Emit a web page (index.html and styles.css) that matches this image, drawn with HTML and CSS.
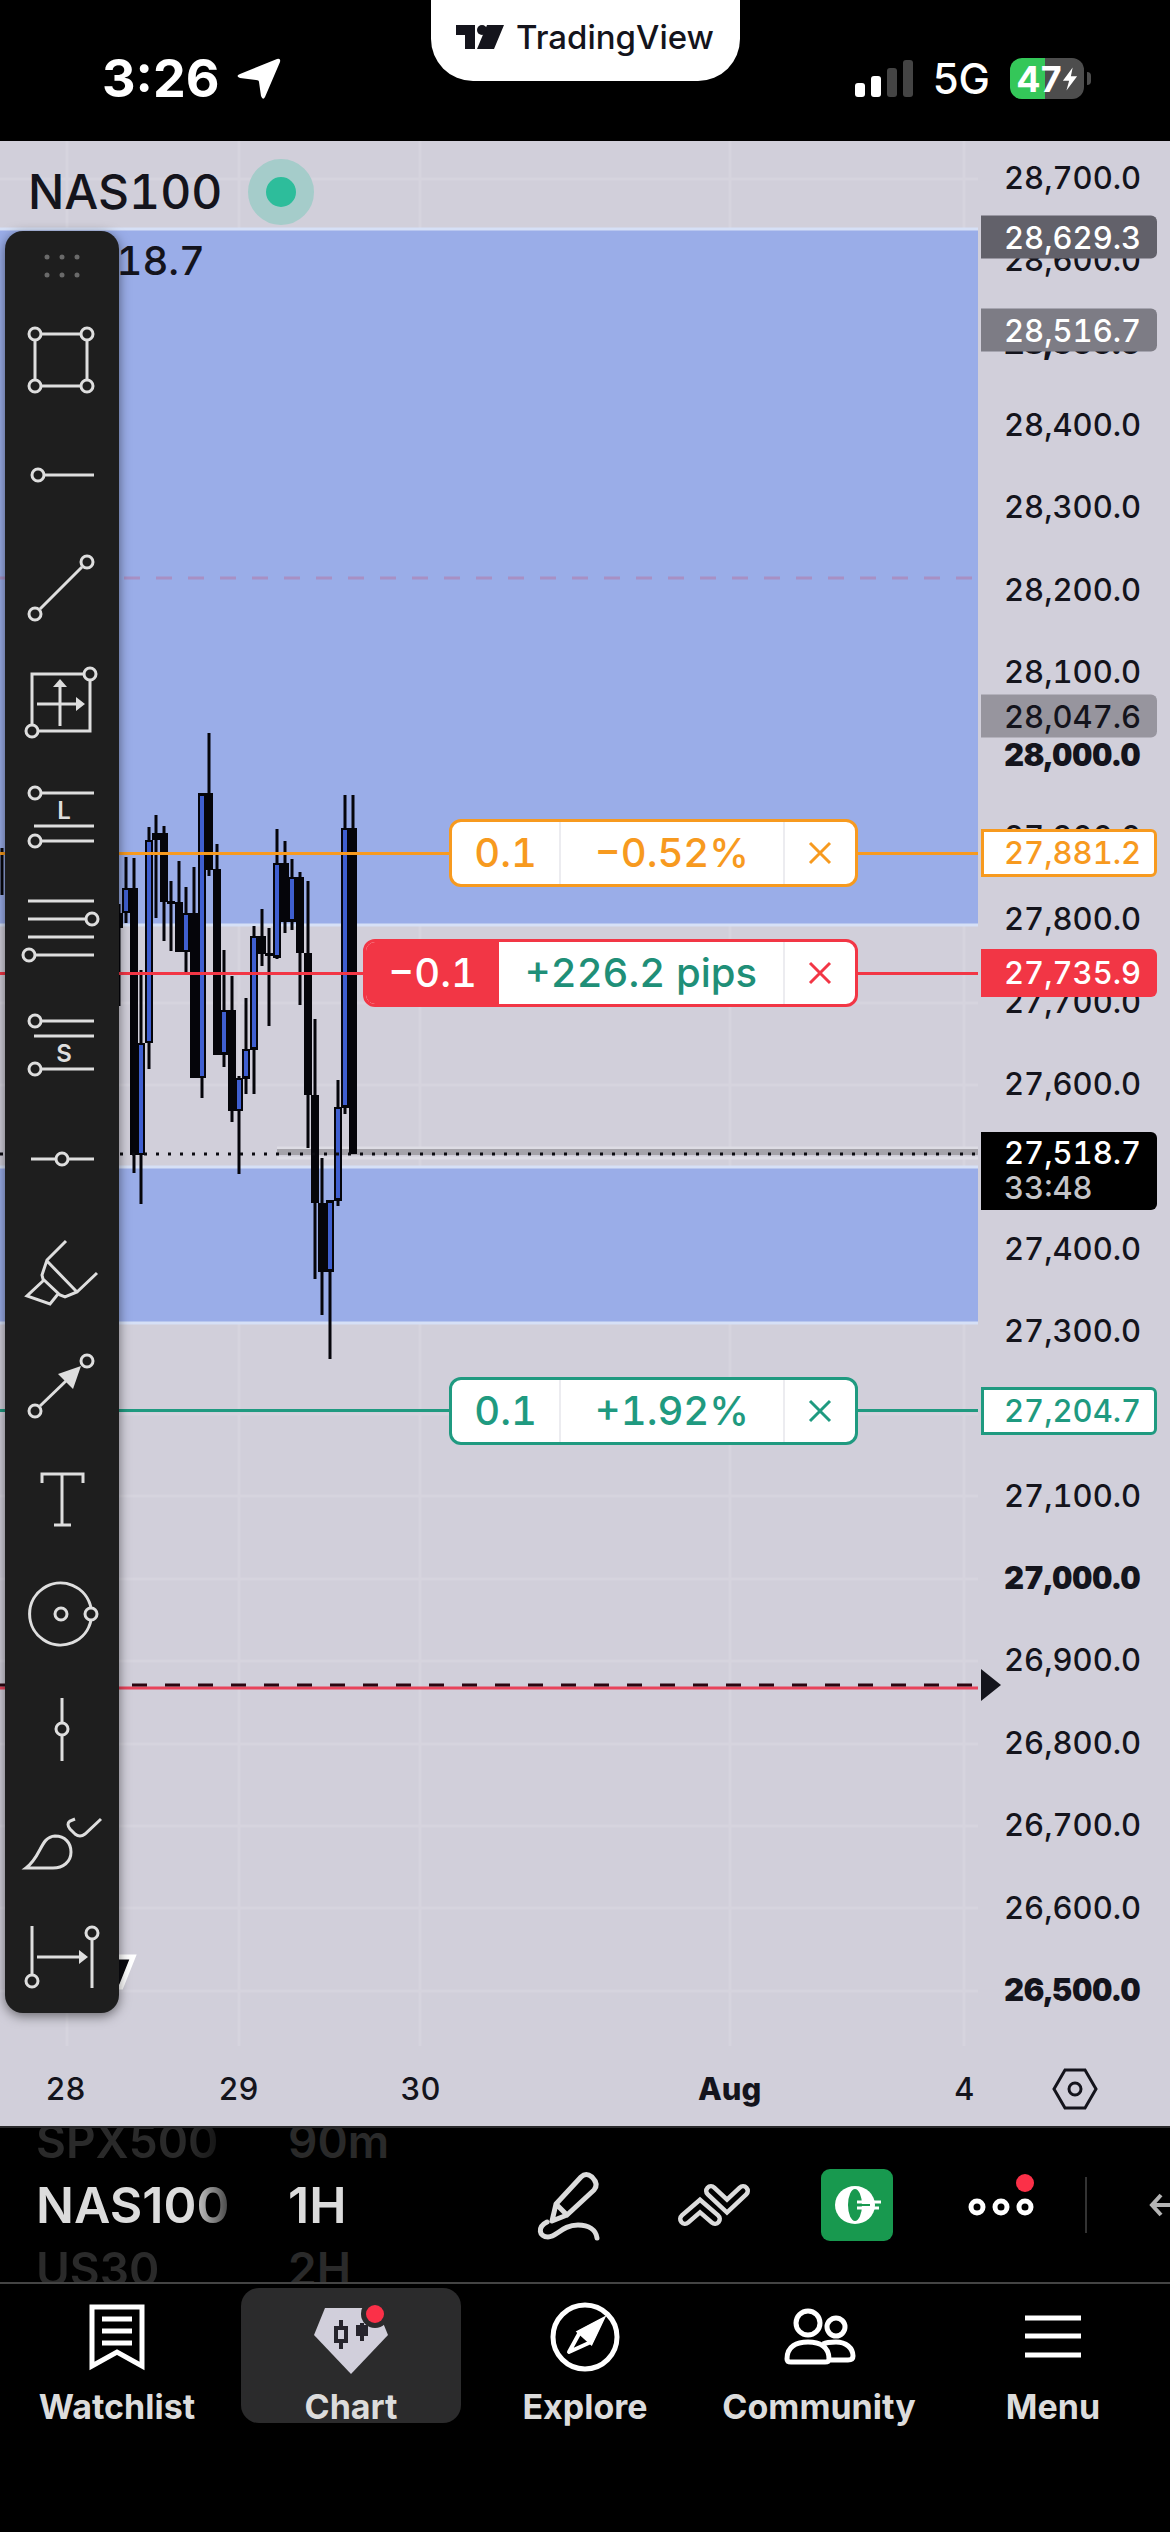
FILE: index.html
```html
<!DOCTYPE html>
<html lang="en">
<head>
  <meta charset="UTF-8">
  <meta name="viewport" content="width=device-width, initial-scale=1.0">
  <title>NAS100 Chart</title>
  <link rel="stylesheet" href="styles.css">
</head>
<body>
  <div class="app">

    <!-- Status bar -->
    <header class="status">
      <div class="status-left">
        <span class="time">3:26</span>
        <svg width="46" height="42" viewBox="0 0 46 42"><path d="M42 1Q46 0 45 4L30 39Q28 43 26 38L24 24Q24 22 21 22L5 20Q0 18 5 16Z" fill="#fff"/></svg>
      </div>
      <div class="brand">
        <svg width="48" height="26" viewBox="0 0 48 26"><path fill="#14141c" d="M0 1H19V25H9V11H0ZM32 25H21L31 1H48L38 25Z"/><circle cx="26" cy="6" r="5" fill="#14141c"/></svg>
        <span>TradingView</span>
      </div>
      <div class="status-right">
        <svg width="58" height="38" viewBox="0 0 58 38">
          <rect x="0" y="23" width="10" height="14" rx="3" fill="#fff"/>
          <rect x="16" y="16" width="10" height="21" rx="3" fill="#fff"/>
          <rect x="32" y="8" width="10" height="29" rx="3" fill="#444"/>
          <rect x="48" y="0" width="10" height="37" rx="3" fill="#444"/>
        </svg>
        <span class="network">5G</span>
        <div class="battery">
          <span>47</span>
          <svg width="16" height="28" viewBox="0 0 18 28"><path d="M12 1L1 16H8L5 27L17 11H10Z" fill="#fff"/></svg>
        </div>
      </div>
    </header>

    <!-- Chart -->
    <main class="chart">
      <div class="pane">
        <svg class="plot" width="100%" height="100%">
          <!-- grid -->
          <path stroke="#d6d4de" stroke-width="3" fill="none" d="M67 0V1905M239 0V1905M420 0V1905M730 0V1905M964 0V1905M0 38H978M0 1273H978M0 1355H978M0 1438H978M0 1520H978M0 1603H978M0 1685H978M0 1767H978M0 1850H978M0 697H978M0 615H978M0 532H978M0 862H978M0 944H978"/>
          <!-- zones -->
          <rect x="-4" y="88" width="990" height="696" fill="#9aade8" stroke="#d6e0f6" stroke-width="3"/>
          <rect x="-4" y="1026" width="990" height="156" fill="#9aade8" stroke="#d6e0f6" stroke-width="3"/>
          <path d="M0 437H978" stroke="#a890c4" stroke-width="3" stroke-dasharray="16 16" stroke-dashoffset="4"/>
          <path d="M277 1007H978M277 1017H978" stroke="#dddce4" stroke-width="3"/>
          <path d="M277 1011H978" stroke="#a5a3aa" stroke-width="6"/>
          <!-- candles: wicks, bodies, up fills -->
          <g transform="translate(0 579)" fill="none">
            <path stroke="#05050a" stroke-width="3" d="M2 128V175M119 184V286M126 137V203M134 138V453M141 250V484M149 107V349M156 95V198M164 106V221M171 161V231M179 141V232M186 167V253M194 147V358M202 73V378M209 13V156M217 124V335M224 230V347M232 256V402M239 356V454M246 278V374M254 206V374M262 189V246M269 208V306M277 109V239M285 121V213M292 139V210M300 152V285M308 161V428M315 299V559M322 438V595M330 480V639M338 360V486M345 75V394M353 75V434"/>
            <path stroke="#05050a" stroke-width="8" d="M119 193V208M126 168V193M134 168V435M141 323V435M149 120V323M156 113V120M164 113V182M171 181V184M179 182V232M186 193V232M194 193V358M202 73V358M209 73V150M217 149V335M224 290V335M232 290V391M239 358V391M246 329V359M254 216V330M262 216V234M269 233V236M277 143V238M285 143V202M292 157V202M300 157V233M308 233V375M315 375V483M322 483V552M330 480V552M338 387V481M345 108V388M353 108V434"/>
            <path stroke="#3f5fd0" stroke-width="4" d="M126 170V191M141 325V433M149 122V321M186 195V230M202 76V356M224 292V332M239 360V389M246 331V356M254 218V327M277 145V235M292 159V199M330 483V549M338 389V478M345 110V385"/>
          </g>
          <!-- price and order lines -->
          <path d="M0 1013H978" stroke="#0b0b10" stroke-width="3" stroke-dasharray="3 9"/>
          <path d="M0 1547H978" stroke="#e8435a" stroke-width="3"/>
          <path d="M0 1544H978" stroke="#2a0610" stroke-width="3" stroke-dasharray="15 18"/>
          <!-- watermark behind the toolbar -->
          <path d="M90 1816H133L121 1846H104Z" fill="#0b0b10" stroke="#fff" stroke-width="5"/>
        </svg>

        <div class="legend">
          <div class="symbol">
            <span>NAS100</span>
            <i class="market-open"></i>
          </div>
          <div class="last">27,518.7</div>
        </div>

        <div class="track">
          <div class="order orange" style="--price: 27881.2">
            <div class="order-box"><span class="qty">0.1</span><span class="pnl">−0.52%</span><button aria-label="Close order"><svg width="24" height="24" viewBox="0 0 24 24"><path d="M2 2L22 22M22 2L2 22"/></svg></button></div>
          </div>
          <div class="order red" style="--price: 27735.9">
            <div class="order-box"><span class="qty">−0.1</span><span class="pnl">+226.2 pips</span><button aria-label="Close position"><svg width="24" height="24" viewBox="0 0 24 24"><path d="M2 2L22 22M22 2L2 22"/></svg></button></div>
          </div>
          <div class="order green" style="--price: 27204.7">
            <div class="order-box"><span class="qty">0.1</span><span class="pnl">+1.92%</span><button aria-label="Close order"><svg width="24" height="24" viewBox="0 0 24 24"><path d="M2 2L22 22M22 2L2 22"/></svg></button></div>
          </div>
        </div>

        <!-- Drawing toolbar -->
        <div class="tools">
          <svg class="grip" viewBox="0 0 114 72"><g fill="#6a6a6a"><circle cx="42" cy="26" r="2.5"/><circle cx="57" cy="26" r="2.5"/><circle cx="72" cy="26" r="2.5"/><circle cx="42" cy="44" r="2.5"/><circle cx="57" cy="44" r="2.5"/><circle cx="72" cy="44" r="2.5"/></g></svg>
          <button aria-label="Rectangle"><svg viewBox="0 0 114 114"><path d="M37 31H75M37 83H75M30 38V76M82 38V76"/><circle cx="30" cy="31" r="6"/><circle cx="82" cy="31" r="6"/><circle cx="30" cy="83" r="6"/><circle cx="82" cy="83" r="6"/></svg></button>
          <button aria-label="Horizontal ray"><svg viewBox="0 0 114 114"><circle cx="33" cy="58" r="6"/><path d="M39 58H89"/></svg></button>
          <button aria-label="Trend line"><svg viewBox="0 0 114 114"><circle cx="82" cy="31" r="6"/><circle cx="30" cy="83" r="6"/><path d="M35 78L77 36"/></svg></button>
          <button aria-label="Date and price range"><svg viewBox="0 0 114 114"><path d="M79 29H27V79M34 86H85V36M55 81V38M32 59H76"/><circle cx="85" cy="29" r="6"/><circle cx="27" cy="86" r="6"/><path class="solid" d="M55 34L62 42H48ZM80 59L71 52V66Z"/></svg></button>
          <button aria-label="Long position"><svg viewBox="0 0 114 114"><path d="M37 34H89M29 67H89M37 82H89"/><circle cx="30" cy="34" r="6"/><circle cx="30" cy="82" r="6"/><text x="59" y="60">L</text></svg></button>
          <button aria-label="Fib retracement"><svg viewBox="0 0 114 114"><path d="M23 28H89M23 46H80M23 64H89M31 82H89"/><circle cx="87" cy="46" r="6"/><circle cx="24" cy="82" r="6"/></svg></button>
          <button aria-label="Short position"><svg viewBox="0 0 114 114"><path d="M37 34H89M29 49H89M37 82H89"/><circle cx="30" cy="34" r="6"/><circle cx="30" cy="82" r="6"/><text x="59" y="75">S</text></svg></button>
          <button aria-label="Horizontal line"><svg viewBox="0 0 114 114"><path d="M26 58H51M63 58H89"/><circle cx="57" cy="58" r="6"/></svg></button>
          <button aria-label="Highlighter"><svg viewBox="0 0 114 114"><path d="M61 26L42 45L37 60L38 64L55 80L60 82L72 77L92 58M42 46L72 77M39 65L22 81L45 89L53 79"/></svg></button>
          <button aria-label="Arrow"><svg viewBox="0 0 114 114"><circle cx="82" cy="32" r="6"/><circle cx="30" cy="82" r="6"/><path d="M35 77L62 51"/><path class="solid" d="M76 37L53 45L68 60Z"/></svg></button>
          <button aria-label="Text"><svg viewBox="0 0 114 114"><path d="M37 40V31H78V40M57 31V82M49 82H66"/></svg></button>
          <button aria-label="Circle"><svg viewBox="0 0 114 114"><path d="M86 51A31 31 0 1 0 86 63"/><circle cx="56" cy="57" r="6"/><circle cx="86" cy="57" r="6"/></svg></button>
          <button aria-label="Vertical line"><svg viewBox="0 0 114 114"><path d="M57 27V52M57 64V90"/><circle cx="57" cy="58" r="6"/></svg></button>
          <button aria-label="Brush"><svg viewBox="0 0 114 114"><path d="M21 83C37 71 35 52 50 51C60 51 66 58 66 67C66 77 58 83 48 83ZM70 34L65 36Q61 39 65 44L70 49Q75 53 80 49L96 34"/></svg></button>
          <button aria-label="Date range"><svg viewBox="0 0 114 114"><path d="M27 27V76M87 41V89M32 58H76"/><circle cx="27" cy="82" r="6"/><circle cx="87" cy="34" r="6"/><path class="solid" d="M83 58L74 51V65Z"/></svg></button>
        </div>
      </div>

      <!-- Price scale -->
      <div class="scale">
        <ol class="ticks">
          <li>28,700.0</li><li>28,600.0</li><li class="major">28,500.0</li><li>28,400.0</li><li>28,300.0</li><li>28,200.0</li><li>28,100.0</li><li class="major">28,000.0</li><li>27,900.0</li><li>27,800.0</li><li>27,700.0</li><li>27,600.0</li><li class="blank">27,500.0</li><li>27,400.0</li><li>27,300.0</li><li class="blank">27,200.0</li><li>27,100.0</li><li class="major">27,000.0</li><li>26,900.0</li><li>26,800.0</li><li>26,700.0</li><li>26,600.0</li><li class="major">26,500.0</li>
        </ol>
        <div class="track">
          <div class="tag dark" style="--price: 28629.3">28,629.3</div>
          <div class="tag mid" style="--price: 28516.7">28,516.7</div>
          <div class="tag light" style="--price: 28047.6">28,047.6</div>
          <div class="tag outline orange" style="--price: 27881.2">27,881.2</div>
          <div class="tag red" style="--price: 27735.9">27,735.9</div>
          <div class="tag current" style="--price: 27495">27,518.7<small>33:48</small></div>
          <div class="tag outline green" style="--price: 27204.7">27,204.7</div>
          <div class="pointer" style="--price: 26871"></div>
        </div>
      </div>

      <!-- Time scale -->
      <div class="dates">
        <span style="left: 6.7%">28</span>
        <span style="left: 24.4%">29</span>
        <span style="left: 43%">30</span>
        <span class="major" style="left: 74.6%">Aug</span>
        <span style="left: 98.6%">4</span>
      </div>
      <button class="settings" aria-label="Chart settings">
        <svg width="48" height="42" viewBox="0 0 48 42" fill="none" stroke="#14141c" stroke-width="3"><path d="M14 2H34L45 21L34 40H14L3 21Z"/><circle cx="24" cy="21" r="6"/></svg>
      </button>
    </main>

    <!-- Symbol and interval bar -->
    <section class="bar">
      <button class="picker fade"><span>SPX500</span><b>NAS100</b><span>US30</span></button>
      <button class="picker interval"><span>90m</span><b>1H</b><span>2H</span></button>
      <div class="actions">
        <button aria-label="Draw"><svg width="84" height="84" viewBox="0 0 84 84" fill="none" stroke="#dcdcdc" stroke-width="5" stroke-linejoin="round" stroke-linecap="round"><path d="M25 58L29 41L54 14Q59 9 65 14Q72 21 67 27L40 52ZM29 41L40 52M20 59C10 64 12 74 21 74C30 74 35 62 51 62C62 62 69 67 70 75"/></svg></button>
        <button aria-label="Indicators"><svg width="84" height="84" viewBox="0 0 84 84" fill="none" stroke-linecap="round"><g stroke="#dcdcdc" stroke-width="14"><path d="M14 56L29 43L44 56M40 28L56 43L72 28"/></g><g stroke="#000" stroke-width="5"><path d="M14 56L29 43L44 56M40 28L56 43L72 28"/></g></svg></button>
        <button aria-label="Broker"><svg width="84" height="84" viewBox="-6 -6 84 84"><rect width="72" height="72" rx="9" fill="#18994f"/><ellipse cx="34" cy="36" rx="20" ry="19" fill="#fff"/><ellipse cx="34" cy="36" rx="7" ry="16" fill="#18994f"/><path d="M36 33H60M36 39H58" stroke="#fff" stroke-width="3"/><path d="M36 36H49" stroke="#18994f" stroke-width="2"/></svg></button>
        <button aria-label="More"><svg width="84" height="84" viewBox="0 0 84 84" fill="none" stroke="#fff" stroke-width="5"><circle cx="18" cy="44" r="6"/><circle cx="42" cy="44" r="6"/><circle cx="66" cy="44" r="6"/><circle cx="66" cy="20" r="9" fill="#fb3048" stroke="none"/></svg></button>
      </div>
      <i class="divider"></i>
      <button class="undo" aria-label="Undo"><svg width="32" height="30" viewBox="0 0 32 30" fill="none" stroke="#b4b4b4" stroke-width="4"><path d="M14 5L5 15L14 25M6 15H32"/></svg></button>
    </section>

    <!-- Bottom navigation -->
    <nav class="nav">
      <a href="#watchlist">
        <svg width="84" height="84" viewBox="0 0 84 84"><path d="M17 12H67V71L42 57L17 71ZM27 24H57M27 36H57M27 48H57"/></svg>
        <span>Watchlist</span>
      </a>
      <a href="#chart" class="active">
        <svg width="84" height="84" viewBox="0 0 84 84"><path d="M16 13H68L79 40L42 79L5 40Z" fill="#d1cfdb" stroke="none"/><path d="M32 25V54M53 28V46" stroke="#26242c" stroke-width="4"/><rect x="27" y="33" width="10" height="13" fill="#d1cfdb" stroke="#26242c" stroke-width="4"/><path d="M47 30H59V41H47Z" fill="#26242c" stroke="none"/><circle cx="66" cy="19" r="14" fill="#2b2b2c" stroke="none"/><circle cx="66" cy="19" r="9" fill="#fb3048" stroke="none"/></svg>
        <span>Chart</span>
      </a>
      <a href="#explore">
        <svg width="84" height="84" viewBox="0 0 84 84"><circle cx="42" cy="42" r="32"/><path d="M58 26L37 37L26 57L48 47Z" stroke-width="4" stroke-linejoin="round"/><path d="M58 26L37 37L48 47Z" fill="#fff" stroke="#fff"/></svg>
        <span>Explore</span>
      </a>
      <a href="#community">
        <svg width="84" height="84" viewBox="0 0 84 84"><circle cx="31" cy="28" r="12"/><circle cx="59" cy="32" r="9"/><path d="M10 64C10 51 20 47 31 47C42 47 52 51 52 64Q52 67 48 67H14Q10 67 10 64ZM46 49C50 47 54 47 59 47C69 47 76 53 76 61Q76 65 71 65H52"/></svg>
        <span>Community</span>
      </a>
      <a href="#menu">
        <svg width="84" height="84" viewBox="0 0 84 84"><path d="M14 23H70M14 41H70M14 60H70"/></svg>
        <span>Menu</span>
      </a>
    </nav>

  </div>
</body>
</html>
```
FILE: styles.css
```css
/* 1. Base */
* {
  margin: 0;
  padding: 0;
  box-sizing: border-box;
}

body {
  font-family: 'Inter', sans-serif;
  background: #000;
  color: #14141c;
}

button {
  background: none;
  border: none;
  font: inherit;
  color: inherit;
  cursor: pointer;
}

svg {
  display: block;
}

.app {
  display: flex;
  flex-direction: column;
  min-height: 100vh;
  overflow: hidden;
}

/* 2. Status bar */
.status {
  display: grid;
  grid-template-columns: 1fr auto 1fr;
  height: 141px;
  color: #fff;
}

.status-left,
.status-right {
  display: flex;
  align-items: center;
  padding-top: 16px;
}

.status-left {
  gap: 16px;
  padding-left: 102px;
}

.status-right {
  justify-content: flex-end;
  gap: 20px;
  padding-right: 86px;
}

.time {
  font-size: 52px;
  font-weight: 700;
}

.network {
  font-size: 42px;
  font-weight: 500;
}

.brand {
  display: flex;
  align-items: center;
  justify-content: center;
  gap: 12px;
  width: 309px;
  height: 81px;
  padding-bottom: 8px;
  background: #fff;
  border-radius: 0 0 42px 42px;
  color: #14141c;
  font-size: 33px;
  font-weight: 500;
}

.battery {
  position: relative;
  display: flex;
  align-items: center;
  justify-content: center;
  width: 74px;
  height: 41px;
  border-radius: 12px;
  background: linear-gradient(to right, #34c759 47%, #4d4d4d 47%);
  font-size: 36px;
  font-weight: 700;
}

.battery::after {
  content: '';
  position: absolute;
  left: 77px;
  top: 14px;
  width: 4px;
  height: 13px;
  border-radius: 0 4px 4px 0;
  background: #4d4d4d;
}

/* 3. Chart */
.chart {
  flex: 1;
  display: grid;
  grid-template-columns: 1fr 192px;
  grid-template-rows: 1fr 75px;
  background: #d1cfda;
  font-variant-numeric: tabular-nums;
}

.pane {
  position: relative;
  min-height: 1880px;
}

.plot {
  position: absolute;
  inset: 0;
}

.legend {
  position: relative;
  padding: 18px 0 0 28px;
}

.symbol {
  display: flex;
  align-items: center;
  gap: 26px;
  font-size: 48px;
  font-weight: 500;
  line-height: 56px;
}

.market-open {
  width: 66px;
  height: 66px;
  border: 18px solid #a5ccca;
  border-radius: 50%;
  background: #2dbd9b;
}

.last {
  font-size: 40px;
  font-weight: 500;
  line-height: 48px;
  padding-top: 12px;
}

/* Prices 28,700 to 26,500 are spread over the track */
.track {
  position: absolute;
  top: 38px;
  right: 0;
  left: 0;
  height: 1812px;
}

.order,
.tag,
.pointer {
  position: absolute;
  top: calc((28700 - var(--price)) / 2200 * 100%);
  transform: translateY(-50%);
}

/* 4. Orders */
.order {
  left: 0;
  right: 0;
  display: flex;
  justify-content: flex-end;
  padding-right: 120px;
  background: linear-gradient(currentColor, currentColor) center / 100% 3px no-repeat;
}

.orange { color: #f79a1f; }
.red { color: #f23645; }
.green { color: #1f9a80; }

.order-box {
  display: flex;
  height: 68px;
  border: 3px solid currentColor;
  border-radius: 12px;
  background: #fff;
  font-size: 40px;
  font-weight: 500;
  line-height: 62px;
  overflow: hidden;
}

.qty {
  padding: 0 22px;
}

.pnl {
  padding: 0 34px;
  border-left: 2px solid #ececf0;
}

.order-box button {
  display: flex;
  align-items: center;
  justify-content: center;
  width: 72px;
  border-left: 2px solid #ececf0;
}

.order-box svg {
  fill: none;
  stroke: currentColor;
  stroke-width: 3;
}

.order.red .qty {
  background: #f23645;
  color: #fff;
}

.order.red .pnl {
  padding: 0 26px;
  border: none;
  color: #1f8f78;
}

/* 5. Price scale */
.scale {
  position: relative;
  font-size: 31px;
  font-weight: 500;
}

.ticks {
  display: flex;
  flex-direction: column;
  justify-content: space-between;
  height: 1848px;
  margin-top: 19px;
  padding-left: 26px;
  list-style: none;
  line-height: 36px;
}

.major {
  font-weight: 900;
}

.blank {
  visibility: hidden;
}

.tag {
  left: 3px;
  width: 176px;
  padding-left: 23px;
  border-radius: 0 6px 6px 0;
  line-height: 43px;
  color: #fff;
}

.dark { background: #62616a; }
.mid { background: #7d7c85; }
.light { background: #97959e; color: #14141c; }
.tag.red { background: #f23645; line-height: 48px; }

.outline {
  padding-left: 20px;
  border: 3px solid currentColor;
  background: #fff;
  line-height: 42px;
}

.outline.orange { color: #f79a1f; }
.outline.green { color: #1f9a80; }

.current {
  padding-top: 3px;
  padding-bottom: 5px;
  background: #000;
  line-height: 35px;
}

.current small {
  display: block;
  font-size: 31px;
  color: #c4c4c8;
}

.pointer {
  left: 3px;
  border-left: 20px solid #14141c;
  border-top: 16px solid transparent;
  border-bottom: 16px solid transparent;
}

/* 6. Time scale */
.dates {
  position: relative;
  font-size: 31px;
  font-weight: 500;
  line-height: 36px;
}

.dates span {
  position: absolute;
  top: 20px;
  transform: translateX(-50%);
}

.dates .major {
  font-weight: 800;
}

.settings {
  display: flex;
  align-items: center;
  padding-left: 73px;
}

/* 7. Drawing toolbar */
.tools {
  position: absolute;
  top: 90px;
  left: 5px;
  display: flex;
  flex-direction: column;
  width: 114px;
  border-radius: 18px;
  background: #1e1e1e;
  box-shadow: 0 3px 12px rgba(0, 0, 0, 0.5);
}

.tools svg {
  width: 100%;
  fill: none;
  stroke: #dedede;
  stroke-width: 3;
}

.tools .grip {
  stroke: none;
}

.tools .solid {
  fill: #dedede;
  stroke: none;
}

.tools text {
  fill: #dedede;
  stroke: none;
  font-size: 24px;
  font-weight: 600;
  text-anchor: middle;
}

/* 8. Symbol and interval bar */
.bar {
  display: flex;
  align-items: center;
  height: 158px;
  padding-left: 36px;
  border-top: 2px solid #2a2a2c;
  border-bottom: 2px solid #444;
  overflow: hidden;
}

.picker {
  flex: none;
  display: flex;
  flex-direction: column;
  width: 252px;
  text-align: left;
  font-size: 46px;
  font-weight: 600;
  line-height: 64px;
  color: #2a2a2a;
}

.picker b {
  font-size: 50px;
  font-weight: 600;
  color: #dcdcdc;
}

.fade {
  -webkit-mask-image: linear-gradient(to right, #000 155px, transparent 210px);
  mask-image: linear-gradient(to right, #000 155px, transparent 210px);
}

.interval {
  width: 239px;
}

.actions {
  flex: none;
  display: flex;
  gap: 60px;
}

.divider {
  flex: none;
  width: 2px;
  height: 56px;
  margin: 0 60px 0 42px;
  background: #333;
}

.undo {
  flex: none;
}

/* 9. Bottom navigation */
.nav {
  display: grid;
  grid-template-columns: repeat(5, 1fr);
  height: 248px;
  padding-top: 4px;
}

.nav a {
  display: flex;
  flex-direction: column;
  align-items: center;
  gap: 8px;
  height: 135px;
  margin: 0 7px;
  padding-top: 7px;
  border-radius: 18px;
  color: #dcdcdc;
  font-size: 34px;
  font-weight: 700;
  line-height: 40px;
  text-decoration: none;
}

.nav .active {
  background: #2b2b2c;
}

.nav svg {
  flex: none;
  fill: none;
  stroke: #fff;
  stroke-width: 5;
}
```
